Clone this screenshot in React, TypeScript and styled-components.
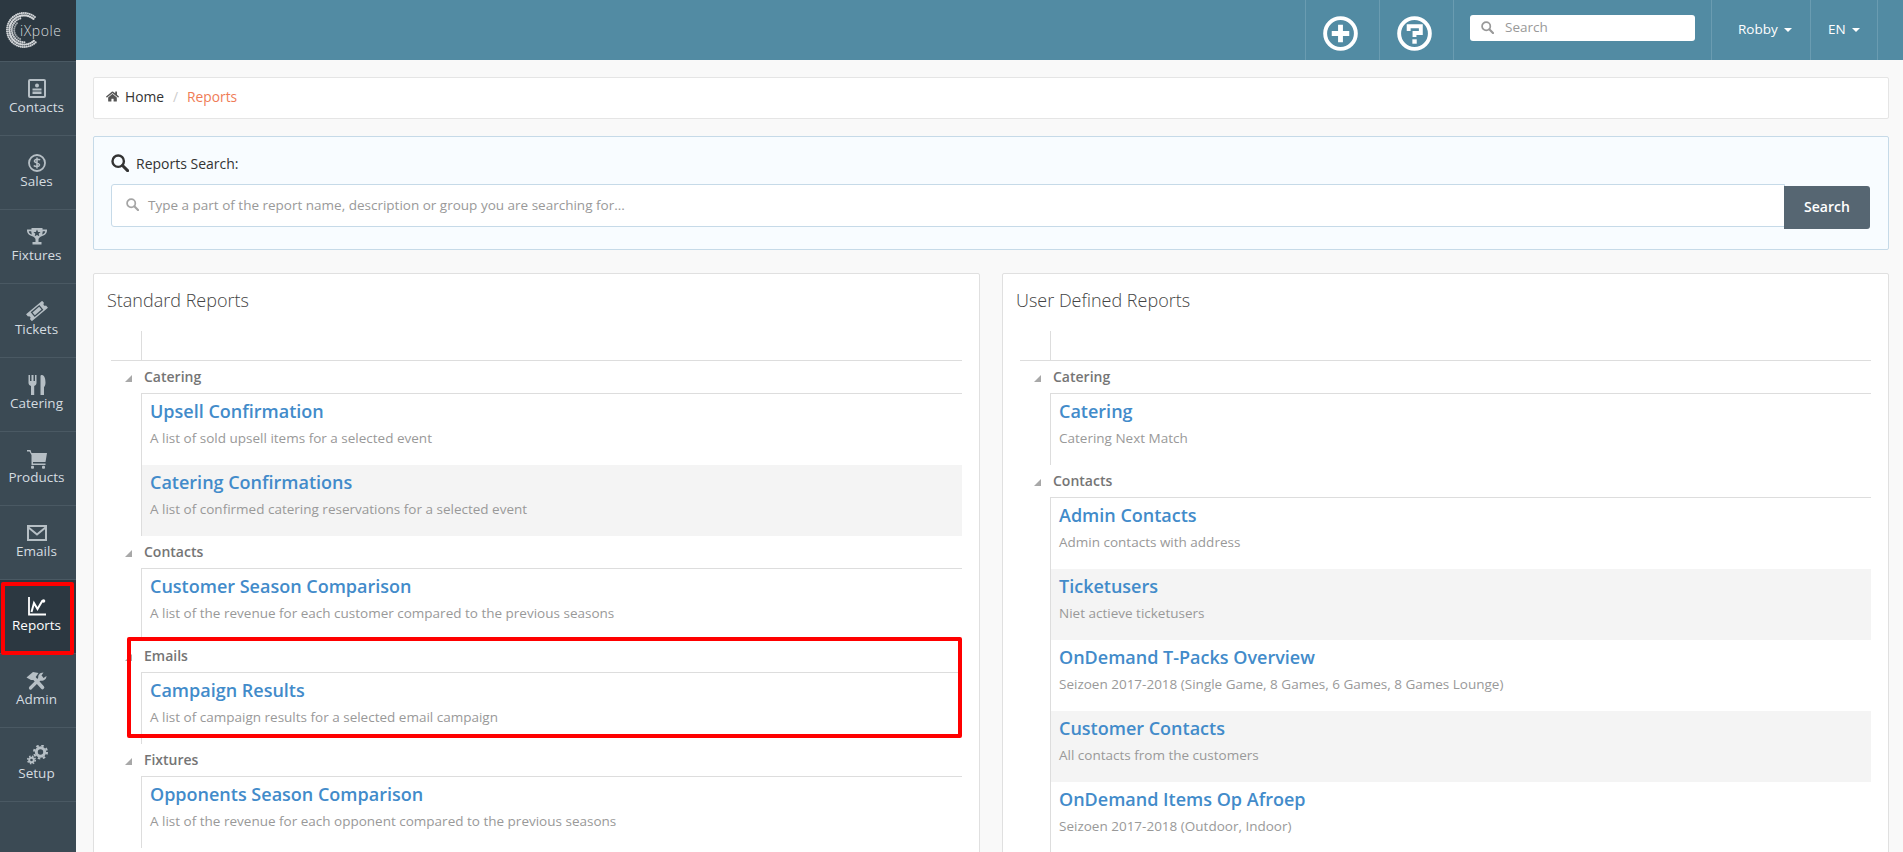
import React from "react";
import styled, { createGlobalStyle } from "styled-components";
import { FaHome } from "react-icons/fa";

const GlobalStyle = createGlobalStyle`
  html, body {
    margin: 0;
    height: 100%;
    overflow: hidden;
    background: #f9f9f9;
    font-family: "Open Sans", "Liberation Sans", sans-serif;
    font-size: 14px;
    color: #333;
  }
  * {
    box-sizing: border-box;
  }
`;

const Shell = styled.div`
  display: flex;
  height: 100vh;
  overflow: hidden;
`;

const Sidebar = styled.nav`
  flex: 0 0 76px;
  background: #3b4a54;
`;

const LogoBox = styled.div`
  height: 61px;
  background: #2c3841;
`;

const NavItem = styled.a<{ $active?: boolean }>`
  position: relative;
  display: flex;
  flex-direction: column;
  align-items: center;
  height: 74px;
  padding: 17px 3px 0 0;
  border-top: 1px solid #4a5963;
  background: ${(p) => (p.$active ? "#2c3841" : "transparent")};
  color: ${(p) => (p.$active ? "#ffffff" : "#d5dce0")};
  &:last-child {
    height: 75px;
    border-bottom: 1px solid #4a5963;
  }
`;

const NavIconBox = styled.span<{ $active?: boolean }>`
  display: block;
  width: 24px;
  height: 20px;
  color: ${(p) => (p.$active ? "#ffffff" : "#b6bfc5")};
  svg {
    display: block;
    width: 24px;
    height: 20px;
  }
`;

const NavLabel = styled.span`
  font-size: 13.5px;
  line-height: 16px;
`;

const RedOutline = styled.div`
  position: absolute;
  border: 4px solid #ff0000;
  border-radius: 2px;
  pointer-events: none;
  z-index: 2;
`;

const NavOutline = styled(RedOutline)`
  left: 1px;
  top: 2px;
  width: 73px;
  height: 73px;
`;

const Main = styled.div`
  flex: 1;
  min-width: 0;
`;

const Header = styled.header`
  display: flex;
  justify-content: flex-end;
  height: 60px;
  padding-right: 25px;
  background: #528ba3;
`;

const HeaderCell = styled.div`
  display: flex;
  align-items: center;
  height: 60px;
  border-left: 1px solid #6a9cb1;
  color: #ffffff;
`;

const IconCell = styled(HeaderCell)`
  justify-content: center;
  width: 74px;
  padding: 6px 4px 0 0;
`;

const HeaderSearchCell = styled(HeaderCell)`
  align-items: flex-start;
  width: 258px;
  padding: 15px 0 0 16px;
`;

const HeaderSearch = styled.div`
  display: flex;
  align-items: center;
  gap: 11px;
  width: 225px;
  height: 26px;
  padding: 0 0 2px 11px;
  background: #ffffff;
  border-radius: 3px;
  color: #999;
  font-size: 13.5px;
`;

const MenuCell = styled(HeaderCell)<{ $width: number; $pad: number; $last?: boolean }>`
  width: ${(p) => p.$width}px;
  padding: 0 0 2px ${(p) => p.$pad}px;
  gap: 6px;
  font-size: 13.5px;
  border-right: ${(p) => (p.$last ? "1px solid #6a9cb1" : "none")};
`;

const Caret = styled.span`
  width: 0;
  height: 0;
  margin-top: 2px;
  border-left: 4px solid transparent;
  border-right: 4px solid transparent;
  border-top: 4px solid #ffffff;
`;

const Content = styled.main`
  padding: 17px 14px 0 17px;
`;

const Breadcrumb = styled.div`
  display: flex;
  align-items: center;
  height: 42px;
  padding: 0 0 4px 12px;
  background: #ffffff;
  border: 1px solid #e5e5e5;
  border-radius: 2px;
  font-size: 13.8px;
  svg {
    color: #555;
    margin-right: 6px;
  }
`;

const CrumbSep = styled.span`
  margin: 0 9px;
  color: #ccc;
`;

const CrumbActive = styled.span`
  color: #ef7c56;
`;

const SearchBox = styled.section`
  height: 114px;
  margin-top: 17px;
  padding: 16px 18px 0 17px;
  background: #f8fcff;
  border: 1px solid #c6dae8;
  border-radius: 2px;
`;

const SearchTitle = styled.div`
  display: flex;
  align-items: center;
  gap: 7px;
  height: 20px;
  font-weight: 500;
`;

const SearchRow = styled.div`
  display: flex;
  align-items: flex-start;
  margin-top: 11px;
`;

const SearchField = styled.div`
  flex: 1;
  display: flex;
  align-items: center;
  gap: 9px;
  height: 43px;
  padding: 0 0 2px 14px;
  margin-right: -1px;
  background: #ffffff;
  border: 1px solid #c6dae8;
  border-radius: 3px 0 0 3px;
  color: #999;
  font-size: 13.5px;
`;

const SearchButton = styled.button`
  width: 86px;
  height: 43px;
  margin-top: 2px;
  padding: 0 0 2px;
  border: none;
  border-radius: 0 3px 3px 0;
  background: #566672;
  color: #ffffff;
  font-family: inherit;
  font-size: 14px;
  font-weight: 600;
`;

const Columns = styled.div`
  display: grid;
  grid-template-columns: 1fr 1fr;
  gap: 22px;
  margin-top: 23px;
`;

const Panel = styled.section`
  height: 700px;
  padding: 13px 17px 0 17px;
  background: #ffffff;
  border: 1px solid #e0e0e0;
  border-radius: 2px;
`;

const PanelTitle = styled.h2`
  margin: 0 0 0 -4px;
  height: 26px;
  font-size: 18px;
  font-weight: 300;
  line-height: 26px;
  color: #444;
`;

const TreeRoot = styled.div`
  height: 30px;
  margin-top: 18px;
  border-bottom: 1px solid #ddd;
`;

const TreeStub = styled.div`
  height: 29px;
  margin-left: 30px;
  border-left: 1px solid #ddd;
`;

const Group = styled.div`
  position: relative;
`;

const GroupHead = styled.div`
  position: relative;
  height: 32px;
  padding-left: 33px;
  font-size: 14px;
  font-weight: 600;
  line-height: 32px;
  color: #757575;
  &::before {
    content: "";
    position: absolute;
    left: 14px;
    top: 14px;
    border-style: solid;
    border-width: 0 0 7px 7px;
    border-color: transparent transparent #a8a8a8 transparent;
  }
`;

const GroupOutline = styled(RedOutline)`
  left: 16px;
  top: -3px;
  right: 0;
  height: 101px;
`;

const ItemList = styled.div`
  margin-left: 30px;
  border-left: 1px solid #ddd;
  border-top: 1px solid #ddd;
`;

const ReportItem = styled.div<{ $shaded: boolean }>`
  height: 71px;
  padding: 4px 0 0 8px;
  background: ${(p) => (p.$shaded ? "#f4f4f4" : "#ffffff")};
`;

const ReportTitle = styled.a`
  display: block;
  font-size: 18px;
  line-height: 26px;
  font-weight: 600;
  color: #428bca;
`;

const ReportDesc = styled.div`
  margin-top: 4px;
  font-size: 13.5px;
  line-height: 20px;
  color: #999;
`;

const ringDots = () => {
  const dots: React.ReactElement[] = [];
  [17, 14.6, 12.2, 9.8].forEach((r, ri) => {
    const count = 40 - ri * 6;
    for (let i = 0; i < count; i++) {
      const deg = -50 - (i * 270) / count;
      if (ri === 3 && (deg > -130 || deg < -250)) continue;
      if (ri === 2 && (deg > -100 || deg < -280)) continue;
      const a = (deg * Math.PI) / 180;
      dots.push(
        <circle
          key={`${r}-${i}`}
          cx={24 + r * Math.cos(a)}
          cy={30 + r * Math.sin(a)}
          r={ri === 1 ? 1.2 : 1.05}
          fill="#e4e7e9"
          opacity={ri === 3 ? 0.6 : 0.9}
        />
      );
    }
  });
  return dots;
};

const Logo = () => (
  <svg width="76" height="61" viewBox="0 0 76 61">
    {ringDots()}
    <text x="20" y="36" fontSize="14" fontWeight="300" fill="#d8dcdf" textLength="41" fontFamily="Open Sans, sans-serif">
      iXpole
    </text>
  </svg>
);

const SearchGlyph = ({ size, color }: { size: number; color: string }) => (
  <svg width={size} height={size} viewBox="0 0 18 18">
    <circle cx="7.200" cy="7.200" r="5.700" fill="none" stroke={color} strokeWidth="2.400" />
    <path d="M11.500 11.500L16.600 16.600" stroke={color} strokeWidth="3" strokeLinecap="round" />
  </svg>
);

const ContactsIcon = () => (
  <svg viewBox="0 0 24 20">
    <rect x="4" y="1" width="16" height="17" rx="1" fill="none" stroke="currentColor" strokeWidth="2" />
    <circle cx="12" cy="6.500" r="2" fill="currentColor" />
    <path d="M7.500 9.500h9v2h-9zM7.500 12.500h9v2.500h-9z" fill="currentColor" />
  </svg>
);

const SalesIcon = () => (
  <svg viewBox="0 0 24 20">
    <circle cx="12" cy="10" r="8" fill="none" stroke="currentColor" strokeWidth="1.800" />
    <path d="M15 7.200c-.6-1-4.800-1.500-5.500.5-.8 2.500 5.500 1.800 5 4.500-.4 1.800-4.700 1.500-5.700.3M12 4.500v11" fill="none" stroke="currentColor" strokeWidth="1.500" />
  </svg>
);

const TrophyIcon = () => (
  <svg viewBox="0 0 24 20">
    <path d="M6.500 1h11v1.500h4.500c.3 4-2.500 6-6 7-1 .8-2.500 1.500-2.500 3v2.500h3v2.500h-9V15h3v-2.500c0-1.500-1.500-2.200-2.500-3-3.500-1-6.300-3-6-7h4.500z" fill="currentColor" />
    <path d="M3.800 4.200c.2 1.800 1.200 2.700 3 3.300l-.6-3.300zM20.200 4.200c-.2 1.800-1.200 2.700-3 3.300l.6-3.300z" fill="#3b4a54" />
    <path d="M12 2.500l1.100 2.400 2.500.2-1.900 1.700.6 2.500-2.300-1.400-2.300 1.400.6-2.500-1.900-1.700 2.500-.2z" fill="#3b4a54" />
  </svg>
);

const TicketIcon = () => (
  <svg viewBox="0 0 24 20">
    <g transform="rotate(-40 12 10)">
      <path d="M1.500 5.500h21v3a1.500 1.500 0 0 0 0 3v3h-21v-3a1.500 1.500 0 0 0 0-3z" fill="currentColor" />
      <rect x="7" y="7.500" width="10" height="5" fill="none" stroke="#3b4a54" strokeWidth="1.300" />
    </g>
  </svg>
);

const CateringIcon = () => (
  <svg viewBox="0 0 24 20">
    <path d="M3.500 0h1.500v6h1.500V0h2v6H10V0h1.500v8c0 1.500-1.200 2.500-2.300 3V20H6V11c-1.200-.5-2.500-1.500-2.500-3z" fill="currentColor" />
    <path d="M17 0c2.500 0 3.500 4 3.500 7.500 0 2.500-.8 4-1.500 4.500v8h-3.500V1c0-.6.700-1 1.500-1z" fill="currentColor" />
  </svg>
);

const CartIcon = () => (
  <svg viewBox="0 0 24 20">
    <path d="M2 1h3.500L6.500 4H22l-1.500 9H8v1.500h12.500V16H6.500V6L4.500 2.500H2z" fill="currentColor" />
    <rect x="6" y="16.800" width="3" height="3" rx="1" fill="currentColor" />
    <rect x="17" y="16.800" width="3" height="3" rx="1" fill="currentColor" />
  </svg>
);

const MailIcon = () => (
  <svg viewBox="0 0 24 20">
    <rect x="3" y="3" width="18" height="14" fill="none" stroke="currentColor" strokeWidth="2" />
    <path d="M3.500 4.500l8.500 7 8.500-7" fill="none" stroke="currentColor" strokeWidth="2" />
  </svg>
);

const ChartIcon = () => (
  <svg viewBox="0 0 24 20">
    <path d="M4 0v17.500h17" fill="none" stroke="currentColor" strokeWidth="1.800" />
    <path d="M6.500 15l2.500-9 3.500 6 5-8.500" fill="none" stroke="currentColor" strokeWidth="2" />
    <circle cx="18.500" cy="4" r="1.800" fill="currentColor" />
  </svg>
);

const ToolsIcon = () => (
  <svg viewBox="0 0 24 20">
    <path d="M17.500 16.500L9 7" stroke="currentColor" strokeWidth="3.600" strokeLinecap="round" />
    <path d="M1.500 6.500L8 1l5.500 1L8.500 9H6z" fill="currentColor" />
    <path d="M5.500 17L16 6.500" stroke="currentColor" strokeWidth="3.200" strokeLinecap="round" />
    <path d="M13.500 7.500c-1-3 1-6 5-6l-2 3 2 2.500 3-2c0 4-4 5.500-6.500 4.500z" fill="currentColor" />
  </svg>
);

const CogsIcon = () => (
  <svg viewBox="0 0 24 20">
    <circle cx="15.500" cy="7" r="4.200" fill="none" stroke="currentColor" strokeWidth="3" />
    <circle cx="15.500" cy="7" r="6.500" fill="none" stroke="currentColor" strokeWidth="2" strokeDasharray="2.500 2.600" />
    <circle cx="6.500" cy="15" r="2.300" fill="none" stroke="currentColor" strokeWidth="2" />
    <circle cx="6.500" cy="15" r="3.800" fill="none" stroke="currentColor" strokeWidth="1.500" strokeDasharray="1.500 1.500" />
  </svg>
);

const PlusCircle = () => (
  <svg width="35" height="35" viewBox="0 0 36 36">
    <circle cx="18" cy="18" r="15.800" fill="none" stroke="#fff" strokeWidth="4" />
    <path d="M15.500 9h5v6.500H27v5h-6.500V27h-5v-6.500H9v-5h6.500z" fill="#fff" />
  </svg>
);

const HelpCircle = () => (
  <svg width="35" height="35" viewBox="0 0 36 36">
    <circle cx="18" cy="18" r="15.800" fill="none" stroke="#fff" strokeWidth="4" />
    <path d="M12 15.500V10.500h12.500v7H18v4" fill="none" stroke="#fff" strokeWidth="4" />
    <rect x="15.800" y="24" width="4.500" height="4.500" fill="#fff" />
  </svg>
);

const navItems = [
  { label: "Contacts", icon: <ContactsIcon /> },
  { label: "Sales", icon: <SalesIcon /> },
  { label: "Fixtures", icon: <TrophyIcon /> },
  { label: "Tickets", icon: <TicketIcon /> },
  { label: "Catering", icon: <CateringIcon /> },
  { label: "Products", icon: <CartIcon /> },
  { label: "Emails", icon: <MailIcon /> },
  { label: "Reports", icon: <ChartIcon />, active: true },
  { label: "Admin", icon: <ToolsIcon /> },
  { label: "Setup", icon: <CogsIcon /> },
];

type Report = { title: string; desc: string };
type ReportGroup = { name: string; outlined?: boolean; items: Report[] };

const standardReports: ReportGroup[] = [
  {
    name: "Catering",
    items: [
      { title: "Upsell Confirmation", desc: "A list of sold upsell items for a selected event" },
      { title: "Catering Confirmations", desc: "A list of confirmed catering reservations for a selected event" },
    ],
  },
  {
    name: "Contacts",
    items: [
      { title: "Customer Season Comparison", desc: "A list of the revenue for each customer compared to the previous seasons" },
    ],
  },
  {
    name: "Emails",
    outlined: true,
    items: [
      { title: "Campaign Results", desc: "A list of campaign results for a selected email campaign" },
    ],
  },
  {
    name: "Fixtures",
    items: [
      { title: "Opponents Season Comparison", desc: "A list of the revenue for each opponent compared to the previous seasons" },
    ],
  },
];

const userReports: ReportGroup[] = [
  {
    name: "Catering",
    items: [{ title: "Catering", desc: "Catering Next Match" }],
  },
  {
    name: "Contacts",
    items: [
      { title: "Admin Contacts", desc: "Admin contacts with address" },
      { title: "Ticketusers", desc: "Niet actieve ticketusers" },
      { title: "OnDemand T-Packs Overview", desc: "Seizoen 2017-2018 (Single Game, 8 Games, 6 Games, 8 Games Lounge)" },
      { title: "Customer Contacts", desc: "All contacts from the customers" },
      { title: "OnDemand Items Op Afroep", desc: "Seizoen 2017-2018 (Outdoor, Indoor)" },
    ],
  },
];

const ReportPanel = ({ title, groups }: { title: string; groups: ReportGroup[] }) => (
  <Panel>
    <PanelTitle>{title}</PanelTitle>
    <TreeRoot>
      <TreeStub />
    </TreeRoot>
    {groups.map((group) => (
      <Group key={group.name}>
        {group.outlined && <GroupOutline />}
        <GroupHead>{group.name}</GroupHead>
        <ItemList>
          {group.items.map((item, i) => (
            <ReportItem key={item.title} $shaded={i % 2 === 1}>
              <ReportTitle>{item.title}</ReportTitle>
              <ReportDesc>{item.desc}</ReportDesc>
            </ReportItem>
          ))}
        </ItemList>
      </Group>
    ))}
  </Panel>
);

const App = () => {
  return (
    <Shell>
      <GlobalStyle />
      <Sidebar>
        <LogoBox>
          <Logo />
        </LogoBox>
        {navItems.map((item) => (
          <NavItem key={item.label} $active={item.active}>
            {item.active && <NavOutline />}
            <NavIconBox $active={item.active}>{item.icon}</NavIconBox>
            <NavLabel>{item.label}</NavLabel>
          </NavItem>
        ))}
      </Sidebar>
      <Main>
        <Header>
          <IconCell>
            <PlusCircle />
          </IconCell>
          <IconCell>
            <HelpCircle />
          </IconCell>
          <HeaderSearchCell>
            <HeaderSearch>
              <SearchGlyph size={13} color="#999" />
              Search
            </HeaderSearch>
          </HeaderSearchCell>
          <MenuCell $width={99} $pad={26}>
            Robby <Caret />
          </MenuCell>
          <MenuCell $width={68} $pad={17} $last>
            EN <Caret />
          </MenuCell>
        </Header>
        <Content>
          <Breadcrumb>
            <FaHome size={13} />
            Home
            <CrumbSep>/</CrumbSep>
            <CrumbActive>Reports</CrumbActive>
          </Breadcrumb>
          <SearchBox>
            <SearchTitle>
              <SearchGlyph size={18} color="#333" />
              Reports Search:
            </SearchTitle>
            <SearchRow>
              <SearchField>
                <SearchGlyph size={13} color="#a5a5a5" />
                Type a part of the report name, description or group you are searching for...
              </SearchField>
              <SearchButton>Search</SearchButton>
            </SearchRow>
          </SearchBox>
          <Columns>
            <ReportPanel title="Standard Reports" groups={standardReports} />
            <ReportPanel title="User Defined Reports" groups={userReports} />
          </Columns>
        </Content>
      </Main>
    </Shell>
  );
};

export default App;
